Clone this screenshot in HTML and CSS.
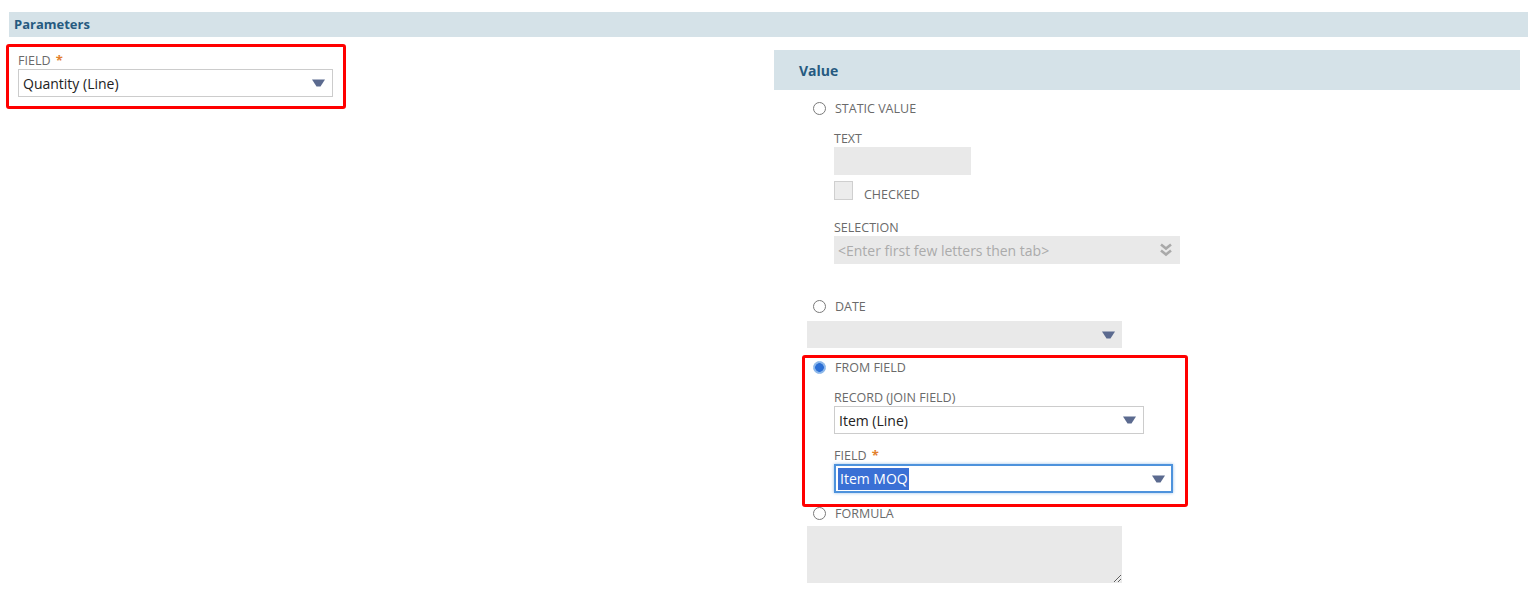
FILE: index.html
```html
<!DOCTYPE html>
<html lang="en">
<head>
    <meta charset="UTF-8">
    <title>Parameters</title>
    <link rel="stylesheet" href="styles.css">
</head>
<body>
    <div class="page">
        <div class="section-header">Parameters</div>
        <div class="columns">
            <div class="left-col">
                <div class="field">
                    <div class="field-label">FIELD <span class="req">*</span></div>
                    <div class="dropdown dropdown-main">
                        <span class="dropdown-value">Quantity (Line)</span>
                        <svg class="arrow" width="13" height="8" viewBox="0 0 13 8"><path d="M0 0.5H13L8.5 7.5H4.5Z" fill="#5b6a8f"/></svg>
                    </div>
                </div>
            </div>
            <div class="right-col">
                <div class="value-header">Value</div>
                <div class="options">
                    <div class="option"><span class="radio"></span>STATIC VALUE</div>
                    <div class="sub">
                        <div class="field-label label-text">TEXT</div>
                        <div class="text-input"></div>
                        <div class="check-row">
                            <span class="checkbox"></span>
                            <span class="check-text">CHECKED</span>
                        </div>
                        <div class="field-label label-selection">SELECTION</div>
                        <div class="select-input">
                            <span class="placeholder">&lt;Enter first few letters then tab&gt;</span>
                            <svg class="chevrons" width="14" height="14" viewBox="0 0 14 14"><path d="M2 1.5L7 5.5L12 1.5M2 7.5L7 11.5L12 7.5" fill="none" stroke="#a9a9a9" stroke-width="2.6"/></svg>
                        </div>
                    </div>
                    <div class="option option-date"><span class="radio"></span>DATE</div>
                    <div class="date-input">
                        <svg class="arrow" width="13" height="8" viewBox="0 0 13 8"><path d="M0 0.5H13L8.5 7.5H4.5Z" fill="#5b6a8f"/></svg>
                    </div>
                    <div class="option option-from"><span class="radio checked"></span>FROM FIELD</div>
                    <div class="sub">
                        <div class="field-label label-record">RECORD (JOIN FIELD)</div>
                        <div class="dropdown dropdown-record">
                            <span class="dropdown-value">Item (Line)</span>
                            <svg class="arrow" width="13" height="8" viewBox="0 0 13 8"><path d="M0 0.5H13L8.5 7.5H4.5Z" fill="#5b6a8f"/></svg>
                        </div>
                        <div class="field-label label-field">FIELD <span class="req">*</span></div>
                        <div class="dropdown dropdown-focus">
                            <span class="dropdown-value"><span class="selected-text">Item MOQ</span></span>
                            <svg class="arrow" width="13" height="8" viewBox="0 0 13 8"><path d="M0 0.5H13L8.5 7.5H4.5Z" fill="#5b6a8f"/></svg>
                        </div>
                    </div>
                    <div class="option option-formula"><span class="radio"></span>FORMULA</div>
                    <textarea class="formula"></textarea>
                </div>
            </div>
        </div>
        <!-- annotation boxes drawn over the form -->
        <div class="highlight highlight-field"></div>
        <div class="highlight highlight-from"></div>
    </div>
</body>
</html>
```

FILE: styles.css
```css
/* Global Styles */
* {
    box-sizing: border-box;
    margin: 0;
    padding: 0;
}
body {
    font-family: 'Open Sans', 'Liberation Sans', sans-serif;
    background: #fff;
    color: #333;
}
.page {
    position: relative;
    padding: 12px 10px 0 9px;
    width: 1538px;
    height: 600px;
    overflow: hidden;
}
/* Section headers */
.section-header {
    height: 25px;
    line-height: 25px;
    padding-left: 5px;
    background: #d5e2e8;
    color: #265a80;
    font-size: 13px;
    font-weight: bold;
}
.columns {
    display: flex;
}
.left-col {
    width: 765px;
}
.right-col {
    width: 746px;
    margin-top: 13px;
}
.value-header {
    height: 40px;
    line-height: 41px;
    padding-left: 25px;
    background: #d5e2e8;
    color: #265a80;
    font-size: 14px;
    font-weight: bold;
}
/* Labels */
.field-label {
    font-size: 12.5px;
    line-height: 16px;
    color: #6a6a6a;
}
.req {
    color: #e2802e;
    font-weight: bold;
    font-size: 13px;
    margin-left: 2px;
}
.field {
    padding: 15px 0 0 9px;
}
.field .field-label {
    height: 17px;
}
/* Dropdowns */
.dropdown {
    display: flex;
    align-items: center;
    justify-content: space-between;
    height: 28px;
    padding: 0 7px 0 4px;
    border: 1px solid #cccccc;
    background: #fff;
    font-size: 14px;
    color: #222;
}
.dropdown-main {
    width: 315px;
}
.dropdown-record {
    width: 310px;
}
.dropdown-focus {
    width: 339px;
    height: 29px;
    border: 2px solid #4d92dc;
    box-shadow: 0 0 3px rgba(77, 146, 220, 0.6);
    padding-left: 2px;
    padding-right: 6px;
}
.selected-text {
    background: #3a70d5;
    color: #fff;
    padding: 1px 1px 2px 2px;
}
/* Value options */
.options {
    padding-left: 33px;
}
.option {
    display: flex;
    align-items: center;
    height: 16px;
    margin-top: 10px;
    font-size: 12.5px;
    color: #6a6a6a;
}
.radio {
    width: 13px;
    height: 13px;
    margin: 0 9px 0 6px;
    border: 1px solid #7a7a7a;
    border-radius: 50%;
    background: #fff;
}
.radio.checked {
    border-color: #8db8ea;
    background: radial-gradient(circle, #2c6fd5 0 4px, #8db8ea 4.6px);
}
.sub {
    padding-left: 27px;
}
.label-text {
    margin-top: 15px;
}
.text-input {
    width: 137px;
    height: 28px;
    background: #e9e9e9;
}
.check-row {
    display: flex;
    align-items: flex-start;
    height: 19px;
    margin-top: 6px;
}
.checkbox {
    width: 19px;
    height: 19px;
    border: 1px solid #cfcfcf;
    background: #ececec;
}
.check-text {
    margin: 6px 0 0 11px;
    font-size: 12.5px;
    line-height: 16px;
    color: #6a6a6a;
}
.label-selection {
    margin-top: 20px;
}
.select-input {
    display: flex;
    align-items: center;
    justify-content: space-between;
    width: 346px;
    height: 28px;
    padding: 0 7px 0 4px;
    background: #e9e9e9;
}
.placeholder {
    font-size: 14px;
    color: #ababab;
}
.option-date {
    margin-top: 34px;
}
.date-input {
    display: flex;
    align-items: center;
    justify-content: flex-end;
    width: 315px;
    height: 27px;
    margin-top: 7px;
    padding-right: 7px;
    background: #e9e9e9;
}
.option-from {
    margin-top: 11px;
}
.label-record {
    margin-top: 15px;
}
.label-field {
    margin-top: 13px;
}
.option-formula {
    margin-top: 12px;
}
.formula {
    display: block;
    width: 315px;
    height: 57px;
    margin-top: 5px;
    border: none;
    background: #e9e9e9;
    resize: both;
    outline: none;
}
/* Red annotation boxes */
.highlight {
    position: absolute;
    border: 3px solid #ff0000;
    border-radius: 3px;
}
.highlight-field {
    left: 6px;
    top: 44px;
    width: 340px;
    height: 65px;
}
.highlight-from {
    left: 802px;
    top: 355px;
    width: 386px;
    height: 152px;
}
```
